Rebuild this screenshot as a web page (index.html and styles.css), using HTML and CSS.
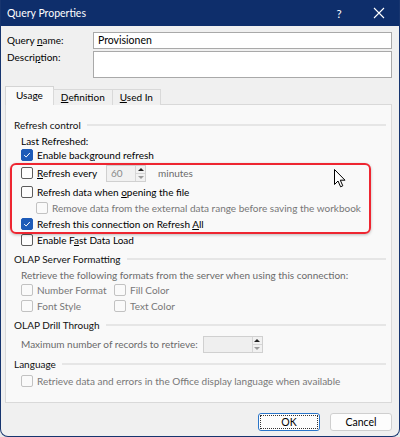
FILE: index.html
```html
<!DOCTYPE html>
<html lang="en">
<head>
    <meta charset="UTF-8">
    <title>Query Properties</title>
    <link rel="stylesheet" href="styles.css">
</head>
<body>
<div class="window">
    <div class="titlebar">
        <span class="title">Query Properties</span>
        <span class="title-btn help">?</span>
        <span class="title-btn close">
            <svg width="12" height="12" viewBox="0 0 12 12"><path d="M1 1 L11 11 M11 1 L1 11" stroke="#fff" stroke-width="1.1" fill="none"/></svg>
        </span>
    </div>

    <div class="content">
        <div class="field-row">
            <label class="field-label">Query <u>n</u>ame:</label>
            <div class="textbox">Provisionen</div>
        </div>
        <div class="field-row">
            <label class="field-label top">Descri<u>p</u>tion:</label>
            <div class="textbox textarea"></div>
        </div>

        <div class="tabs">
            <div class="tab active">Usa<u>g</u>e</div>
            <div class="tab"><u>D</u>efinition</div>
            <div class="tab"><u>U</u>sed In</div>
        </div>

        <div class="panel">
            <!-- Refresh control -->
            <div class="group">
                <div class="group-title">Refresh control</div>
                <div class="group-body">
                    <div class="plain-row">Last Refreshed:</div>
                    <div class="option compact">
                        <span class="check checked"><svg viewBox="0 0 12 12"><path d="M2.6 6.2 L5 8.4 L9.4 3.6" stroke="#fff" stroke-width="1.2" fill="none"/></svg></span>
                        <span>Enable back<u>g</u>round refresh</span>
                    </div>
                    <div class="option tall">
                        <span class="check"></span>
                        <span class="every"><u>R</u>efresh every</span>
                        <span class="spin small">
                            <span class="spin-value">60</span>
                            <span class="spin-buttons"><span class="arrow up"></span><span class="arrow down"></span></span>
                        </span>
                        <span class="muted minutes">minutes</span>
                    </div>
                    <div class="option spaced">
                        <span class="check"></span>
                        <span>Refresh data when <u>o</u>pening the file</span>
                    </div>
                    <div class="option indent disabled">
                        <span class="check"></span>
                        <span>Remove data from the external data range before saving the workbook</span>
                    </div>
                    <div class="option">
                        <span class="check checked"><svg viewBox="0 0 12 12"><path d="M2.6 6.2 L5 8.4 L9.4 3.6" stroke="#fff" stroke-width="1.2" fill="none"/></svg></span>
                        <span>Refresh this connection on Refresh <u>A</u>ll</span>
                    </div>
                    <div class="option">
                        <span class="check"></span>
                        <span>Enable F<u>a</u>st Data Load</span>
                    </div>
                </div>
            </div>

            <!-- OLAP Server Formatting -->
            <div class="group">
                <div class="group-title">OLAP Server Formatting</div>
                <div class="group-body muted">
                    <div class="plain-row">Retrieve the following formats from the server when using this connection:</div>
                    <div class="format-grid">
                        <div class="option disabled"><span class="check"></span><span>Number Format</span></div>
                        <div class="option disabled"><span class="check"></span><span>Fill Color</span></div>
                        <div class="option disabled"><span class="check"></span><span>Font Style</span></div>
                        <div class="option disabled"><span class="check"></span><span>Text Color</span></div>
                    </div>
                </div>
            </div>

            <!-- OLAP Drill Through -->
            <div class="group">
                <div class="group-title">OLAP Drill Through</div>
                <div class="group-body muted">
                    <div class="option tall records">
                        <span class="records-label">Maximum number of records to retrieve:</span>
                        <span class="spin wide">
                            <span class="spin-value"></span>
                            <span class="spin-buttons"><span class="arrow up"></span><span class="arrow down"></span></span>
                        </span>
                    </div>
                </div>
            </div>

            <!-- Language -->
            <div class="group">
                <div class="group-title">Language</div>
                <div class="group-body">
                    <div class="option disabled">
                        <span class="check"></span>
                        <span>Retrieve data and errors in the Office display language when available</span>
                    </div>
                </div>
            </div>
        </div>

        <div class="footer">
            <button class="btn btn-default"><span class="focus">OK</span></button>
            <button class="btn">Cancel</button>
        </div>
    </div>

    <!-- annotation drawn over the dialog -->
    <div class="highlight"></div>
    <svg class="cursor" width="13" height="19" viewBox="0 0 13 19">
        <path d="M0.5 0.5 L0.5 15.5 L4 12 L6.6 17.8 L8.8 16.8 L6.3 11.2 L11 11.2 Z" fill="#fff" stroke="#000" stroke-width="1"/>
    </svg>
</div>
</body>
</html>
```

FILE: styles.css
```css
body {
    margin: 0;
    background: #e9e9e9;
    font-family: Lato, "Noto Sans", sans-serif;
    font-size: 10px;
    color: #000;
}
u {
    text-decoration: underline;
    text-underline-offset: 1px;
}
.window {
    position: relative;
    width: 400px;
    height: 437px;
    box-sizing: border-box;
    display: flex;
    flex-direction: column;
    background: #f0f0f0;
    border: 1px solid #17356f;
    border-top: none;
    border-radius: 0 0 8px 8px;
    overflow: hidden;
}

/* title bar */
.titlebar {
    height: 26px;
    flex-shrink: 0;
    display: flex;
    align-items: center;
    background: #0e2e6b;
    color: #fff;
    padding-left: 6px;
}
.title {
    flex: 1;
    font-size: 10.5px;
}
.title-btn {
    display: flex;
    align-items: center;
    justify-content: center;
}
.help {
    width: 14px;
    margin-right: 26px;
    font-size: 11.5px;
}
.close {
    width: 14px;
    margin-right: 13px;
}

.content {
    flex: 1;
    display: flex;
    flex-direction: column;
    padding: 6px 7px 0 4px;
}

/* name + description */
.field-row {
    display: flex;
    align-items: flex-start;
}
.field-row + .field-row {
    margin-top: 2px;
}
.field-label {
    width: 86px;
    padding-left: 2px;
    padding-top: 2px;
    flex-shrink: 0;
}
.field-label.top {
    padding-top: 0;
}
.textbox {
    flex: 1;
    height: 17px;
    box-sizing: border-box;
    border: 1px solid #a9a9a9;
    background: #fff;
    padding: 1px 4px;
    line-height: 13px;
    font-size: 10.5px;
}
.textarea {
    height: 27px;
}

/* tabs */
.tabs {
    display: flex;
    margin-top: 8px;
    padding-left: 1px;
    position: relative;
    z-index: 1;
}
.tab {
    height: 15px;
    margin-top: 3px;
    padding: 0 7px;
    line-height: 15px;
    border: 1px solid #d9d9d9;
    border-bottom: none;
    background: #f0f0f0;
    margin-left: -1px;
}
.tab.active {
    height: 18px;
    margin-top: 0;
    line-height: 17px;
    padding: 0 10px;
    background: #f9f9f9;
    border-color: #d4d4d4;
}

.panel {
    height: 299px;
    box-sizing: border-box;
    margin-top: -1px;
    padding: 12px 5px 0 8px;
    background: #f9f9f9;
    border: 1px solid #d9d9d9;
}

/* groups */
.group + .group {
    margin-top: 3px;
}
.group-title {
    display: flex;
    align-items: center;
    height: 16px;
    color: #111;
    margin-bottom: 1px;
}
.group-title::after {
    content: "";
    flex: 1;
    height: 2px;
    margin-left: 6px;
    background: #e6e6e6;
}
.group-body {
    padding-left: 7px;
}
.plain-row {
    height: 14px;
    line-height: 14px;
}
.muted {
    color: #6a6a6a;
}

.option {
    display: flex;
    align-items: center;
    height: 16px;
    white-space: nowrap;
}
.option.compact {
    height: 14px;
}
.option.tall {
    height: 18px;
    margin-top: 2px;
}
.option.spaced {
    margin-top: 2px;
}
.option.indent {
    padding-left: 15px;
}
.option.disabled {
    color: #777;
}

.check {
    width: 12px;
    height: 12px;
    box-sizing: border-box;
    flex-shrink: 0;
    margin-right: 4px;
    border: 1px solid #5c5c5c;
    border-radius: 2px;
    background: #fdfdfd;
}
.check svg {
    display: block;
    width: 10px;
    height: 10px;
}
.check.checked {
    background: #1d5bb8;
    border-color: #1d5bb8;
}
.disabled .check {
    border-color: #c2c2c2;
    background: #fafafa;
}

.format-grid {
    display: grid;
    grid-template-columns: 93px auto;
    justify-content: start;
}

/* spinners */
.every {
    width: 69px;
}
.spin {
    display: flex;
    height: 17px;
    box-sizing: border-box;
    border: 1px solid #d0d0d0;
    background: #f1f1f1;
}
.spin.small {
    width: 40px;
}
.spin.wide {
    width: 60px;
    margin-left: 5px;
}
.spin-value {
    flex: 1;
    padding-left: 4px;
    line-height: 15px;
    color: #8a8a8a;
}
.spin-buttons {
    width: 9px;
    display: flex;
    flex-direction: column;
    border-left: 1px solid #d6d6d6;
}
.arrow {
    flex: 1;
    display: flex;
    align-items: center;
    justify-content: center;
}
.arrow::before {
    content: "";
    border-left: 3px solid transparent;
    border-right: 3px solid transparent;
}
.arrow.up {
    border-bottom: 1px solid #d6d6d6;
}
.arrow.up::before {
    border-bottom: 3px solid #222;
}
.arrow.down::before {
    border-top: 3px solid #9a9a9a;
}
.minutes {
    margin-left: 12px;
}
.records .spin-value {
    background: #efefef;
}

/* buttons */
.footer {
    display: flex;
    justify-content: flex-end;
    gap: 10px;
    margin-top: 10px;
}
.btn {
    width: 62px;
    height: 18px;
    padding: 0;
    font-family: inherit;
    font-size: 10.5px;
    color: #000;
    background: #fdfdfd;
    border: 1px solid #cfcfcf;
    border-radius: 3px;
}
.btn-default {
    border-color: #2a75c9;
    padding: 1px;
}
.btn-default .focus {
    display: block;
    height: 100%;
    box-sizing: border-box;
    border: 1px dotted #333;
    line-height: 12px;
}

/* red annotation + mouse pointer */
.highlight {
    position: absolute;
    left: 9px;
    top: 163px;
    width: 361px;
    height: 71px;
    box-sizing: border-box;
    border: 2px solid #ee2631;
    border-radius: 6px;
    box-shadow: 0 1px 3px rgba(0, 0, 0, 0.25);
}
.cursor {
    position: absolute;
    left: 333px;
    top: 169px;
}
```
